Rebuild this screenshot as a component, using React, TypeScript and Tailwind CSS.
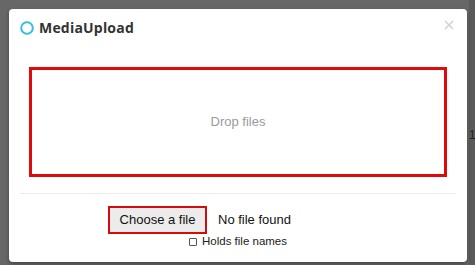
import React from "react";

export default function App() {
  return (
    <div className="relative w-[475px] h-[265px] bg-[#676767] pt-[9px] pl-[9px] overflow-hidden" style={{ fontFamily: '"Liberation Sans", Arial, sans-serif' }}>
      <div className="absolute right-0 top-0 w-[6px] h-[265px] bg-[#5a5a5a]" />
      <div className="absolute left-[469px] top-[129px] text-[12px] text-[#222] leading-none">1</div>
      <div className="relative w-[458px] h-[253px] bg-white rounded-[4px] shadow-[0_2px_4px_rgba(0,0,0,0.35)] flex flex-col">
        <div className="h-[36px] flex items-center pl-[11px] pr-[13px]">
          <svg width="14" height="14" viewBox="0 0 14 14" className="mr-[5px] mt-[1px]">
            <circle cx="7" cy="7" r="5.8" fill="none" stroke="#35bfdc" strokeWidth="2" />
          </svg>
          <span className="text-[14px] font-bold text-[#333] tracking-[0.2px]" style={{ fontFamily: '"Open Sans", sans-serif' }}>MediaUpload</span>
          <svg width="10" height="10" viewBox="0 0 10 10" className="ml-auto mt-[-4px]">
            <path d="M1 1L9 9M9 1L1 9" stroke="#cfcfcf" strokeWidth="1.4" />
          </svg>
        </div>
        <div className="px-[20px] pt-[22px]">
          <div className="h-[110px] border-[3px] border-[#e10a0a] flex items-center justify-center">
            <span className="text-[13px] text-[#9a9a9a]">Drop files</span>
          </div>
        </div>
        <div className="mx-[11px] mt-[16px] h-px bg-[#ececec]" />
        <div className="pl-[99px] pt-[12px] flex items-center">
          <button className="w-[99px] h-[28px] border-2 border-[#d80b0b] bg-[#ececec] text-[13px] text-[#111] flex items-center justify-center">Choose a file</button>
          <span className="ml-[11px] text-[13px] text-[#111]">No file found</span>
        </div>
        <div className="pl-[180px] mt-[2px] flex items-center">
          <span className="w-[8px] h-[8px] border border-[#555] rounded-[1px] bg-white mr-[5px]" />
          <span className="text-[11.5px] text-[#222] leading-none">Holds file names</span>
        </div>
      </div>
    </div>
  );
}
